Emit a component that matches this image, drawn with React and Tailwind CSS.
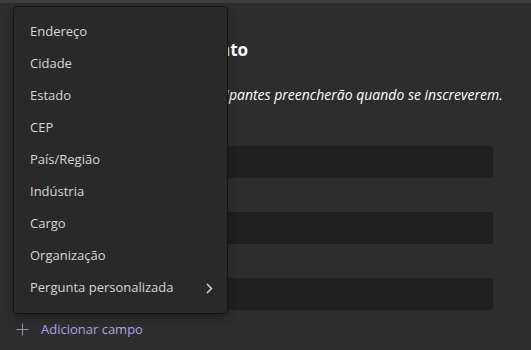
import React from "react";

const items = [
  "Endereço",
  "Cidade",
  "Estado",
  "CEP",
  "País/Região",
  "Indústria",
  "Cargo",
  "Organização",
];

export default function App() {
  return (
    <div
      className="relative w-[531px] h-[350px] overflow-hidden bg-[#2d2d2d] text-[#d6d6d6]"
      style={{ fontFamily: '"Open Sans", "Noto Sans", sans-serif' }}
    >
      <div className="h-[3px] bg-[#3d3d3d]" />
      <div className="pl-[32px] pr-[38px]">
        <h1 className="mt-[35px] ml-[18px] text-[17px] leading-[24px] font-bold text-white">
          Inscrição para o evento
        </h1>
        <p className="mt-[23px] ml-[5px] text-[14px] leading-[20px] italic text-white whitespace-nowrap">
          Adicione campos que os participantes preencherão quando se inscreverem.
        </p>
        <div className="mt-[41px] flex flex-col gap-[34px]">
          <div className="h-[32px] rounded-[3px] bg-[#202020]" />
          <div className="h-[32px] rounded-[3px] bg-[#202020]" />
          <div className="h-[32px] rounded-[3px] bg-[#202020]" />
        </div>
      </div>
      <div className="absolute left-[16px] top-[320px] flex items-center gap-[12px] text-[13px] text-[#a5a6e6]">
        <svg width="13" height="13" viewBox="0 0 13 13" className="text-[#8f90c4]">
          <path d="M6.5 0.5V12.5M0.5 6.5H12.5" stroke="currentColor" strokeWidth="1" fill="none" />
        </svg>
        <span>Adicionar campo</span>
      </div>
      <div className="absolute left-[13px] top-[6px] w-[215px] rounded-[4px] border border-[#141414] bg-[#292929] pt-[9px] pb-[9px] shadow-[0_4px_8px_rgba(0,0,0,0.3)]">
        {items.map((t) => (
          <div key={t} className="h-[32px] flex items-center pl-[16px] text-[13px] text-[#d6d6d6]">
            {t}
          </div>
        ))}
        <div className="h-[32px] flex items-center justify-between pl-[16px] pr-[14px] text-[13px] text-[#d6d6d6]">
          <span>Pergunta personalizada</span>
          <svg width="7" height="11" viewBox="0 0 7 11">
            <path d="M1 1L5.5 5.5L1 10" stroke="#d6d6d6" strokeWidth="1.5" fill="none" />
          </svg>
        </div>
      </div>
    </div>
  );
}
